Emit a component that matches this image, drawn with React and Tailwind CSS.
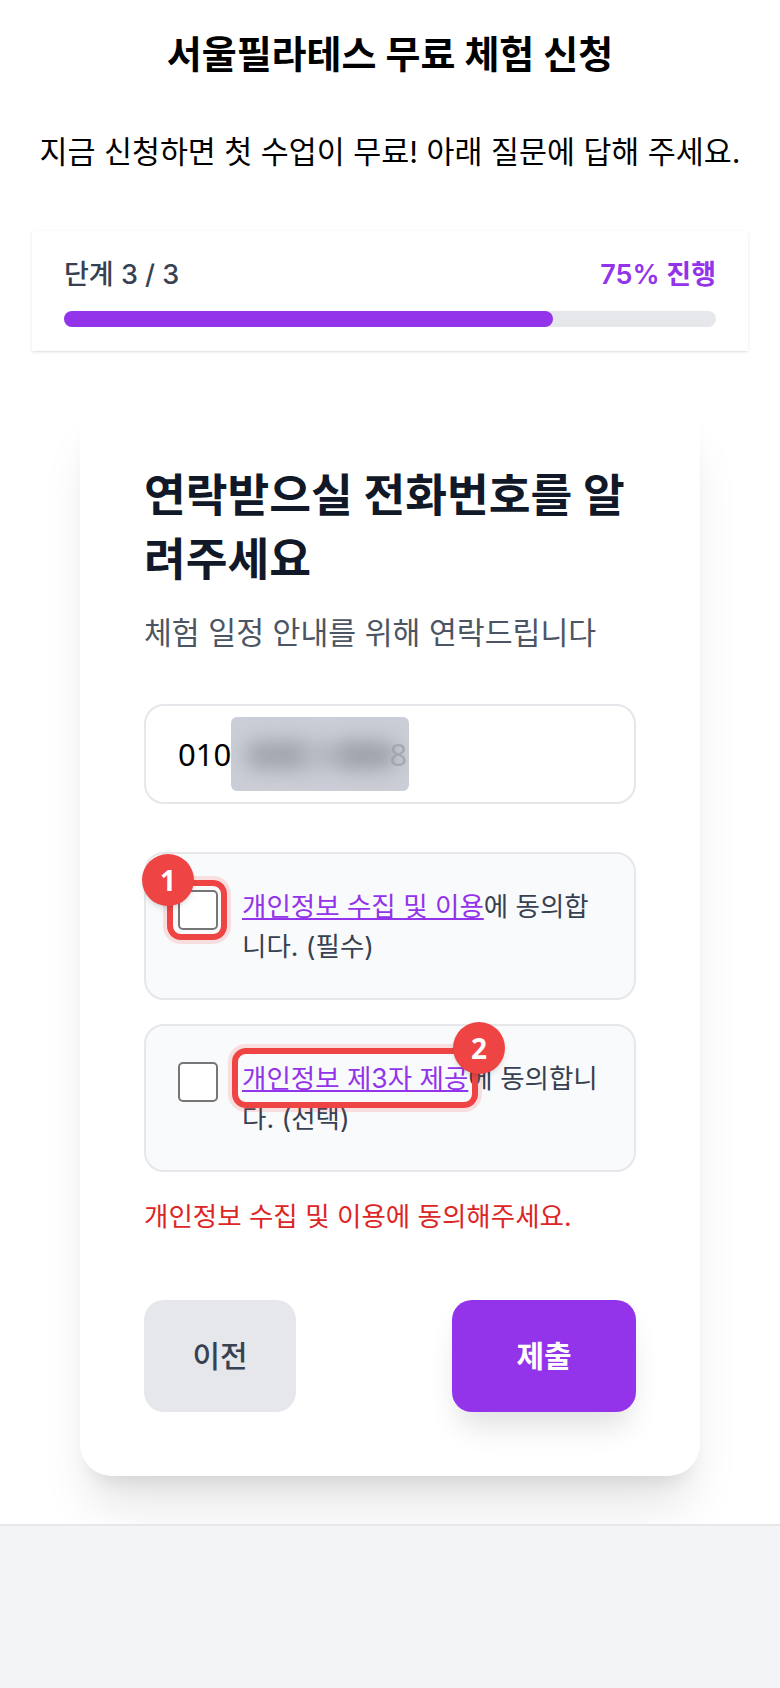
import React from 'react';

const font = { fontFamily: '"Inter", "Noto Sans CJK KR", sans-serif' };
const sysFont = { fontFamily: '"Noto Sans", sans-serif' };

function Badge({ n, className }) {
  return (
    <span className={`absolute flex h-[52px] w-[52px] items-center justify-center rounded-full bg-[#ef4444] text-[28px] font-bold text-white shadow-md ${className}`} style={sysFont}>
      {n}
    </span>
  );
}

function ConsentRow({ link, rest, children }) {
  return (
    <div className="relative flex gap-[24px] rounded-[20px] border-2 border-[#e5e7eb] bg-[#f9fafb] p-[32px]">
      <span className="mt-[4px] h-[40px] w-[40px] shrink-0 rounded-[5px] border-2 border-[#767676] bg-white" />
      <p className="text-[26.5px] leading-[40px] text-[#374151]">
        <a className="text-[#9333ea] underline">{link}</a>
        {rest}
      </p>
      {children}
    </div>
  );
}

export default function App() {
  return (
    <div className="min-h-[1688px] bg-white" style={font}>
      <main className="px-[32px] pb-[48px]">
        <h1 className="pt-[28px] text-center text-[38px] leading-[52px] font-bold text-black">서울필라테스 무료 체험 신청</h1>
        <p className="mt-[50px] text-center text-[30.4px] leading-[44px] text-black">지금 신청하면 첫 수업이 무료! 아래 질문에 답해 주세요.</p>

        {/* Progress */}
        <section className="mt-[57px] bg-white px-[32px] py-[24px] shadow-sm">
          <div className="flex items-center justify-between text-[27px] leading-[40px] font-medium">
            <span className="text-[#374151]">단계 3 / 3</span>
            <span className="font-semibold text-[#9333ea]">75% 진행</span>
          </div>
          <div className="mt-[16px] h-[16px] rounded-full bg-[#e5e7eb]">
            <div className="h-full w-3/4 rounded-full bg-[#9333ea]" />
          </div>
        </section>

        {/* Card */}
        <section className="mx-[48px] mt-[49px] rounded-[32px] bg-white p-[64px] shadow-[0_40px_50px_-10px_rgba(0,0,0,0.1),0_16px_20px_-12px_rgba(0,0,0,0.1)]">
          <h2 className="text-[45.4px] leading-[64px] font-bold text-[#111827]">연락받으실 전화번호를 알려주세요</h2>
          <p className="mt-[19px] text-[30.3px] leading-[44px] text-[#4b5563]">체험 일정 안내를 위해 연락드립니다</p>

          <div className="mt-[49px] flex h-[100px] items-center rounded-[20px] border-2 border-[#e5e7eb] bg-white pl-[32px] text-[31px] text-black" style={sysFont}>
            <span>010</span>
            <div className="relative h-[74px] w-[178px] overflow-hidden rounded-[6px] bg-[#cbced6]">
              <div className="absolute top-[24px] left-[14px] h-[28px] w-[66px] rounded-full bg-[#a0a3ab] blur-[10px]" />
              <div className="absolute top-[28px] left-[72px] h-[20px] w-[50px] rounded-full bg-[#b0b3bb] blur-[10px]" />
              <div className="absolute top-[24px] left-[106px] h-[28px] w-[60px] rounded-full bg-[#9c9fa7] blur-[10px]" />
              <span className="absolute top-[14px] right-[2px] text-[#9a9da6] opacity-70 blur-[0.5px]">8</span>
            </div>
          </div>

          <div className="mt-[48px] flex flex-col gap-[24px]">
            <ConsentRow link="개인정보 수집 및 이용" rest="에 동의합니다. (필수)">
              <span className="absolute top-[26px] left-[21px] h-[60px] w-[60px] rounded-[14px] border-[6px] border-[#ef4444] shadow-[0_0_0_4px_rgba(239,68,68,0.15)]" />
              <Badge n="1" className="top-0 left-[-4px]" />
            </ConsentRow>
            <ConsentRow link="개인정보 제3자 제공" rest="에 동의합니다. (선택)">
              <span className="absolute top-[22px] left-[86px] h-[60px] w-[246px] rounded-[14px] border-[6px] border-[#ef4444] shadow-[0_0_0_4px_rgba(239,68,68,0.15)]" />
              <Badge n="2" className="top-[-4px] left-[307px]" />
            </ConsentRow>
          </div>

          <p className="mt-[24px] text-[26.5px] leading-[40px] text-[#dc2626]">개인정보 수집 및 이용에 동의해주세요.</p>

          <div className="mt-[64px] flex justify-between">
            <button className="h-[112px] w-[152px] rounded-[20px] bg-[#e5e7eb] text-[30px] font-medium text-[#374151]">이전</button>
            <button className="h-[112px] w-[184px] rounded-[20px] bg-[#9333ea] text-[30px] font-bold text-white shadow-[0_20px_30px_-6px_rgba(0,0,0,0.12)]">제출</button>
          </div>
        </section>
      </main>

      <footer className="h-[164px] border-t-2 border-[#e5e7eb] bg-[#f3f4f6]" />
    </div>
  );
}
